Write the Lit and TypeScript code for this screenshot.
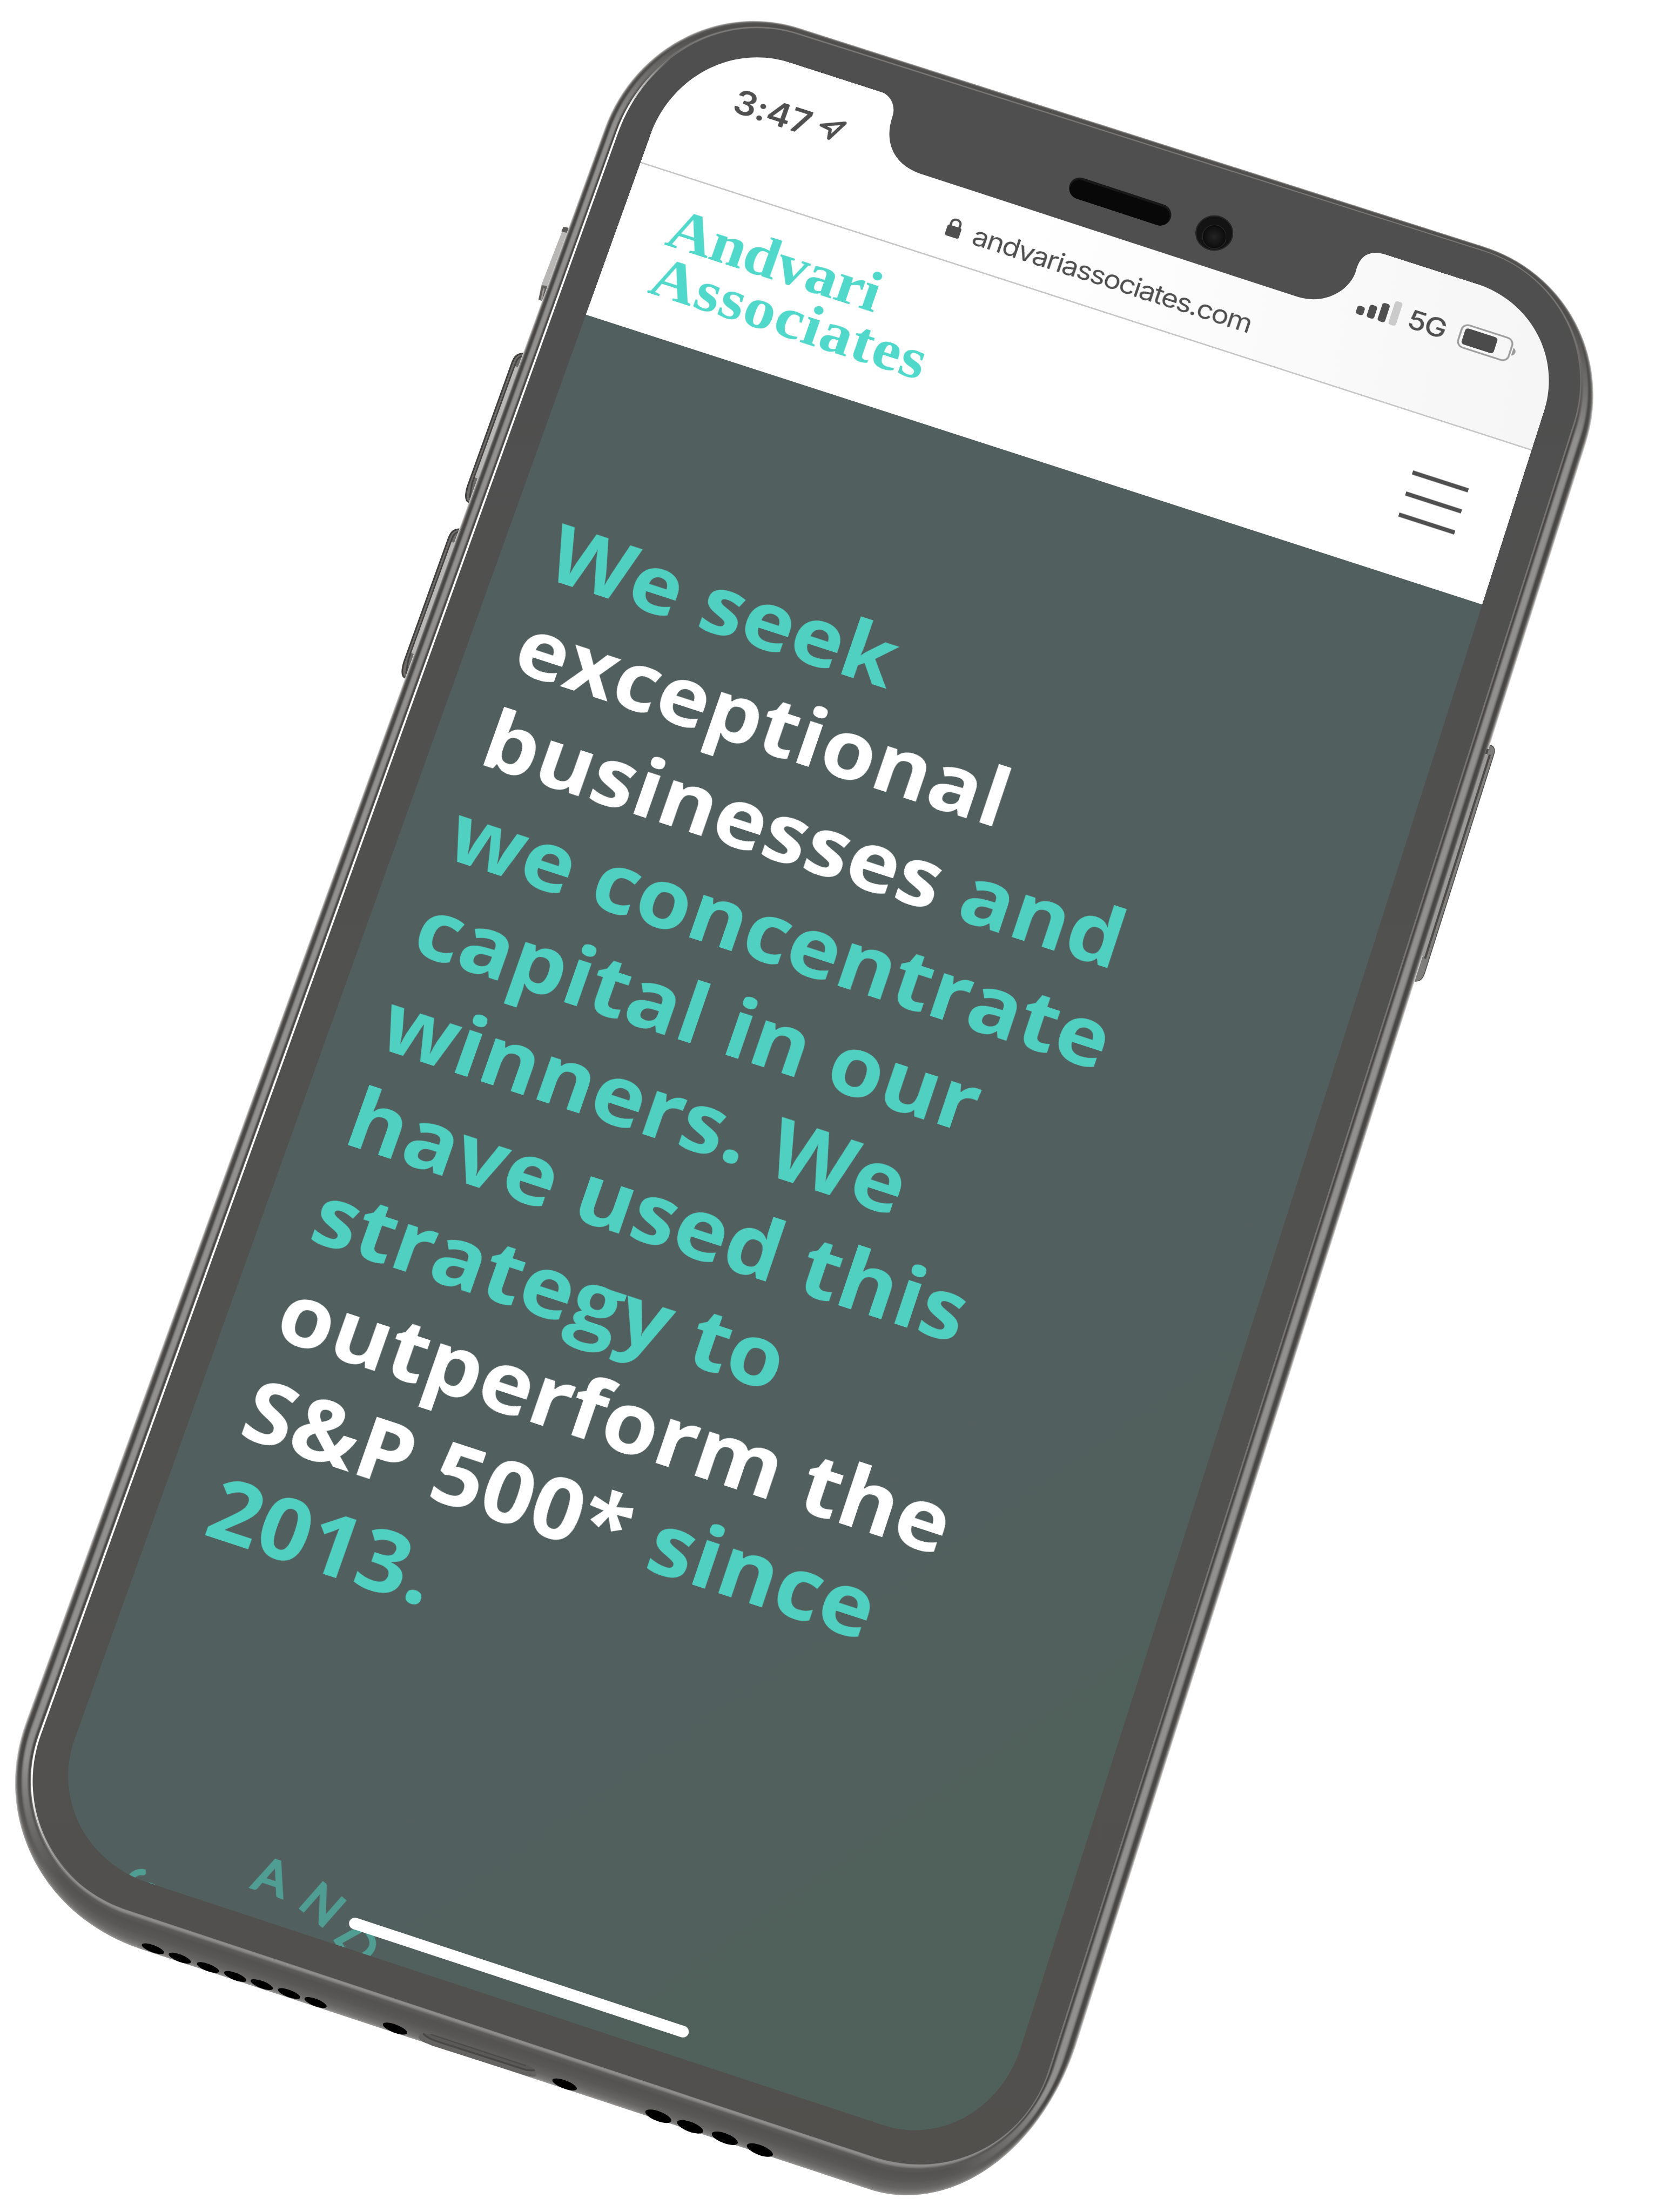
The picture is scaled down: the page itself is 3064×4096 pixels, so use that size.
import { LitElement, html, svg, css, unsafeCSS } from "lit";
import { customElement } from "lit/decorators.js";

type Pt = [number, number];
interface Shape {
  corners: Pt[];
  lens: [number, number][];
}

const ART_W = 4060;
const ART_H = 5428;
const PAGE_W = 3064;
const PAGE_H = 4096;
const SCALE = PAGE_W / ART_W;
const SCREEN_W = 1800;
const SCREEN_H = 3895;

/* Corners run top-left, top-right, bottom-right, bottom-left.
   Each length pair is the rounding [before, after] the corner, clockwise. */
const BODY: Shape = {
  corners: [[1613, -42], [4007, 722], [2490, 5490], [-87, 4640]],
  lens: [[381, 365], [385, 385], [502, 377], [456, 439]],
};
const GLASS: Shape = {
  corners: [[1637, -16], [3962, 719], [2470, 5401], [-18, 4578]],
  lens: [[362, 335], [340, 335], [335, 345], [349, 343]],
};
const SCREEN: Shape = {
  corners: [[1688, 73], [3863, 774], [2417, 5297], [89, 4529]],
  lens: [[275, 262], [253, 247], [287, 265], [290, 280]],
};

const lerp = (a: number, b: number, t: number) => a + (b - a) * t;

function mix(a: Shape, b: Shape, t: number): Shape {
  return {
    corners: a.corners.map((p, i) => [lerp(p[0], b.corners[i][0], t), lerp(p[1], b.corners[i][1], t)] as Pt),
    lens: a.lens.map((p, i) => [lerp(p[0], b.lens[i][0], t), lerp(p[1], b.lens[i][1], t)] as [number, number]),
  };
}

function toward(from: Pt, to: Pt, d: number): Pt {
  const dx = to[0] - from[0];
  const dy = to[1] - from[1];
  const l = Math.hypot(dx, dy);
  return [from[0] + (dx / l) * d, from[1] + (dy / l) * d];
}

/* Start point and curve command of one rounded corner. */
function corner(shape: Shape, i: number, s = 1, k = 0.56): [string, string] {
  const f = (p: Pt) => `${(p[0] * s).toFixed(2)} ${(p[1] * s).toFixed(2)}`;
  const n = shape.corners.length;
  const c = shape.corners[i];
  const prev = shape.corners[(i + n - 1) % n];
  const next = shape.corners[(i + 1) % n];
  const [la, lb] = shape.lens[i];
  return [
    f(toward(c, prev, la)),
    `C${f(toward(c, prev, la * (1 - k)))} ${f(toward(c, next, lb * (1 - k)))} ${f(toward(c, next, lb))}`,
  ];
}

function outline(shape: Shape, s = 1): string {
  return shape.corners.map((_, i) => {
    const [start, curve] = corner(shape, i, s);
    return `${i === 0 ? "M" : "L"}${start}${curve}`;
  }).join("") + "Z";
}

function leftSide(shape: Shape): string {
  const [s3, c3] = corner(shape, 3);
  const [s0, c0] = corner(shape, 0);
  return `M${s3}${c3}L${s0}${c0}`;
}

/* Projects the flat screen rectangle on to the tilted quad. */
function projection(q: Pt[], w: number, h: number, s: number): string {
  const [p0, p1, p2, p3] = q;
  const sx = p0[0] - p1[0] + p2[0] - p3[0];
  const sy = p0[1] - p1[1] + p2[1] - p3[1];
  const ax = p1[0] - p2[0], ay = p1[1] - p2[1];
  const bx = p3[0] - p2[0], by = p3[1] - p2[1];
  const det = ax * by - bx * ay;
  const g = (sx * by - bx * sy) / det;
  const k = (ax * sy - sx * ay) / det;
  const a = p1[0] - p0[0] + g * p1[0];
  const b = p3[0] - p0[0] + k * p3[0];
  const d = p1[1] - p0[1] + g * p1[1];
  const e = p3[1] - p0[1] + k * p3[1];
  const m = [
    (a * s) / w, (d * s) / w, 0, g / w,
    (b * s) / h, (e * s) / h, 0, k / h,
    0, 0, 1, 0,
    p0[0] * s, p0[1] * s, 0, 1,
  ];
  return `matrix3d(${m.map((v) => v.toFixed(12)).join(",")})`;
}

type Stop = [number, number];
/* Grey level across the metal rim, 0 at the silhouette and 1 at the glass. */
const TOP_RIM: Stop[] = [[0, 200], [0.1, 130], [0.25, 84], [0.6, 78], [0.72, 84], [0.82, 124], [0.92, 120], [1, 80]];
const SIDE_RIM: Stop[] = [[0, 215], [0.05, 160], [0.13, 95], [0.2, 72], [0.32, 72], [0.42, 128], [0.5, 146], [0.7, 144], [0.78, 100], [0.83, 70], [0.88, 72], [0.92, 118], [0.98, 118], [1, 80]];
const BOTTOM_RIM: Stop[] = [[0, 150], [0.06, 122], [0.2, 102], [0.45, 88], [0.7, 84], [0.84, 92], [0.9, 130], [0.95, 148], [1, 120]];

function level(stops: Stop[], t: number): string {
  let v = stops[stops.length - 1][1];
  for (let i = 1; i < stops.length; i++) {
    if (t <= stops[i][0]) {
      const [t0, v0] = stops[i - 1];
      const [t1, v1] = stops[i];
      v = lerp(v0, v1, (t - t0) / (t1 - t0));
      break;
    }
  }
  const c = Math.round(v);
  return `rgb(${c},${c - 1},${c - 2})`;
}

const RINGS = Array.from({ length: 44 }, (_, i) => i / 44);
const GRILLE_LEFT: Pt[] = [[375, 4782], [441, 4805], [510, 4828], [577, 4850], [642, 4870], [709, 4892], [774, 4914]];
const GRILLE_RIGHT: Pt[] = [[1615, 5193], [1693, 5219], [1778, 5247], [1864, 5276]];
const SCREWS: Pt[] = [[969, 4978], [1385, 5115]];

const HEADLINE: { text: string; strong?: boolean }[][] = [
  [{ text: "We seek" }],
  [{ text: "exceptional", strong: true }],
  [{ text: "businesses", strong: true }, { text: " and" }],
  [{ text: "we concentrate" }],
  [{ text: "capital in our" }],
  [{ text: "winners. We" }],
  [{ text: "have used this" }],
  [{ text: "strategy to" }],
  [{ text: "outperform the", strong: true }],
  [{ text: "S&P 500*", strong: true }, { text: " since" }],
  [{ text: "2013." }],
];

const SEAL: [string, number][] = [["S", -48.3], ["A", 0.3], ["N", 21.5], ["D", 41]];

@customElement("phone-body")
export class PhoneBody extends LitElement {
  static styles = css`
    :host { display: block; }
    svg { display: block; width: 100%; height: 100%; }
  `;

  private hole([x, y]: Pt, rx: number, ry: number) {
    return svg`<ellipse cx=${x} cy=${y} rx=${rx} ry=${ry} fill="#000" transform=${`rotate(21 ${x} ${y})`}></ellipse>`;
  }

  private volumeKey(shift: string) {
    return svg`<g transform=${shift}>
      <path d="M1292 869C1270 864 1261 873 1255 890L1147 1190C1139 1212 1140 1229 1149 1234L1165 1232L1292 900Z" fill="#6c6b69"></path>
      <path d="M1288 868C1270 866 1262 874 1256 891L1148 1191C1141 1212 1141 1228 1149 1232" fill="none" stroke="#424140" stroke-width="4"></path>
      <path d="M1286 874C1272 874 1268 882 1263 896L1158 1186L1152 1222" fill="none" stroke="#444342" stroke-width="4"></path>
    </g>`;
  }

  private volumeGlint(shift: string) {
    return svg`<g transform=${shift}>
      <path d="M1268 900L1169 1173" stroke="#b9b7b5" stroke-width="9" fill="none"></path>
    </g>`;
  }

  render() {
    return html`<svg viewBox="0 0 ${ART_W} ${ART_H}" aria-hidden="true">
      <defs>
        ${RINGS.map((t, i) => svg`<linearGradient id=${`r${i}`} gradientUnits="userSpaceOnUse" x1="157" y1="-475" x2="-1377" y2="4180">
          <stop offset="0.01" stop-color=${level(TOP_RIM, t)}></stop>
          <stop offset="0.065" stop-color=${level(SIDE_RIM, t)}></stop>
          <stop offset="0.935" stop-color=${level(SIDE_RIM, t)}></stop>
          <stop offset="0.985" stop-color=${level(BOTTOM_RIM, t)}></stop>
        </linearGradient>`)}
        <linearGradient id="bezel" x1="0" y1="0" x2="0" y2="1">
          <stop offset="0" stop-color="#4f4f4f"></stop>
          <stop offset="0.6" stop-color="#515150"></stop>
          <stop offset="1" stop-color="#51504d"></stop>
        </linearGradient>
        <linearGradient id="glint" gradientUnits="userSpaceOnUse" x1="157" y1="-475" x2="-1377" y2="4180">
          <stop offset="0.025" stop-color="#fff" stop-opacity="0"></stop>
          <stop offset="0.055" stop-color="#fff"></stop>
          <stop offset="0.95" stop-color="#fff"></stop>
          <stop offset="0.985" stop-color="#fff" stop-opacity="0"></stop>
        </linearGradient>
      </defs>

      <path d="M1400 560L1382 557L1377 572L1327 702L1321 735L1336 741Z" fill="#b8b7b5"></path>
      <path d="M1400 560L1382 557L1377 568L1398 573Z" fill="#5a5958"></path>
      <path d="M1329 700L1321 735L1336 741L1350 702Z" fill="#5e5d5c"></path>
      <path d="M1334 708L1328 738" stroke="#9a9997" stroke-width="4"></path>
      ${this.volumeKey("")}
      ${this.volumeKey("translate(-156 431)")}
      <path d="M3640 1850C3642 1832 3650 1827 3657 1829C3668 1832 3668 1843 3664 1854L3495 2388C3490 2402 3484 2408 3472 2408L3455 2400Z" fill="#7f7d7b" stroke="#50504f" stroke-width="2"></path>

      ${RINGS.map((t, i) => svg`<path d=${outline(mix(BODY, GLASS, t))} fill=${`url(#r${i})`}></path>`)}
      <path d=${outline(GLASS)} fill="url(#bezel)"></path>
      <path d=${leftSide(GLASS)} fill="none" stroke="url(#glint)" stroke-width="4.5"></path>

      ${this.volumeGlint("")}
      ${this.volumeGlint("translate(-156 431)")}
      <path d="M3648 1852L3491 2346" stroke="#9c9a98" stroke-width="7"></path>
      <path d="M3650 1838L3646 1850M3655 1852L3496 2352" stroke="#4b4a49" stroke-width="5"></path>

      ${GRILLE_LEFT.map((p) => this.hole(p, 29, 9))}
      ${GRILLE_RIGHT.map((p) => this.hole(p, 34, 12))}
      ${SCREWS.map((p) => this.hole(p, 32, 10))}
      <path d="M1027 4998C1030 4987 1048 4985 1062 4991L1296 5068C1310 5074 1318 5086 1315 5094C1312 5097 1300 5096 1290 5093L1060 5020C1040 5012 1026 5006 1027 4998Z" fill="#646362"></path>
      <path d="M1062 4991L1296 5068C1306 5073 1312 5078 1313 5083L1294 5081L1076 5010C1056 5003 1048 4998 1042 4990Z" fill="#5a5958"></path>
      <path d="M1038 4990C1050 5003 1066 5007 1084 5013L1286 5078C1296 5081 1304 5081 1312 5080" fill="none" stroke="#484746" stroke-width="4.5"></path>
      <path d="M1056 4992L1290 5069" stroke="#4c4b4a" stroke-width="3"></path>
    </svg>`;
  }
}

@customElement("phone-notch")
export class PhoneNotch extends LitElement {
  static styles = css`
    :host { display: block; }
    svg { display: block; width: 100%; height: 100%; }
  `;

  render() {
    return html`<svg viewBox="0 0 ${ART_W} ${ART_H}" aria-hidden="true">
      <defs>
        <radialGradient id="lens">
          <stop offset="0" stop-color="#242424"></stop>
          <stop offset="1" stop-color="#0b0b0b"></stop>
        </radialGradient>
      </defs>
      <path d="M2140 217L2157 223C2184 232 2199 258 2189 287C2168 350 2193 405 2260 427L3185 729C3242 746 3303 722 3325 670C3333 638 3348 610 3400 624.5L3400 570L2160 180Z" fill="#4f4f4f"></path>
      <path d="M2649 462L2847 527" stroke="#181818" stroke-width="53" stroke-linecap="round"></path>
      <path d="M2648 465L2846 530" stroke="#080808" stroke-width="47" stroke-linecap="round"></path>
      <ellipse cx="2979" cy="572" rx="46" ry="43" fill="#131313"></ellipse>
      <ellipse cx="2979" cy="572" rx="45" ry="42" fill="none" stroke="#262626" stroke-width="3"></ellipse>
      <circle cx="2979" cy="581" r="29" fill="url(#lens)" stroke="#2b2b2b" stroke-width="1.5"></circle>
    </svg>`;
  }
}

@customElement("phone-screen")
export class PhoneScreen extends LitElement {
  static styles = css`
    :host {
      display: flex;
      flex-direction: column;
      width: ${SCREEN_W}px;
      height: ${SCREEN_H}px;
      overflow: hidden;
      background: #fff;
      color: #4f4f4f;
      font-family: Inter, "Liberation Sans", sans-serif;
    }
    svg { display: block; flex: none; }
    .chrome {
      box-sizing: border-box;
      height: 305px;
      padding-top: 78px;
      border-bottom: 3px solid #c6c6c6;
      background: linear-gradient(82deg, #fff 40%, #f6f6f6 95%);
    }
    .status {
      display: flex;
      justify-content: space-between;
      height: 70px;
      padding: 0 84px 0 131px;
    }
    .group { display: flex; }
    .time {
      width: 167px;
      font-size: 71px;
      line-height: 71px;
      font-weight: 600;
      letter-spacing: -0.5px;
      white-space: nowrap;
    }
    .net {
      width: 98px;
      padding-left: 17px;
      box-sizing: border-box;
      font-size: 58px;
      line-height: 74px;
      font-weight: 500;
      letter-spacing: -2px;
    }
    .address {
      display: flex;
      justify-content: center;
      gap: 24px;
      margin-top: 54px;
      padding-left: 11px;
      font-size: 56px;
      line-height: 60px;
      letter-spacing: -2.3px;
    }
    .header {
      box-sizing: border-box;
      display: flex;
      justify-content: space-between;
      height: 343px;
      padding: 55px 92px 0 95px;
    }
    .logo {
      font-family: "Liberation Serif", serif;
      font-weight: 700;
      font-size: 122px;
      line-height: 108px;
      color: #50d8ca;
    }
    .logo .first { letter-spacing: -1.5px; }
    .logo .second { letter-spacing: 1.6px; }
    .menu { margin-top: 62px; }
    .hero {
      position: relative;
      flex: 1;
      padding: 386px 0 0 92px;
      background: linear-gradient(125deg, #525f5f 62%, #50605b 84%);
    }
    h1 {
      margin: 0;
      font-family: "Open Sans", "Noto Sans", sans-serif;
      font-weight: 700;
      font-size: 166.2px;
      line-height: 203.2px;
      color: #50d0c1;
      white-space: pre;
    }
    .strong { color: #fff; }
    .line { display: block; }
    .seal {
      position: absolute;
      left: 0;
      bottom: 0;
    }
    .seal text {
      font-family: Lato, sans-serif;
      font-size: 89px;
      fill: #509e93;
      stroke: #509e93;
      stroke-width: 4.5px;
    }
    .home {
      position: absolute;
      left: 579px;
      bottom: 38px;
      width: 644px;
      height: 22px;
      border-radius: 11px;
      background: #fff;
    }
  `;

  render() {
    return html`
      <div class="chrome">
        <div class="status">
          <div class="group">
            <span class="time">3:47</span>
            <svg width="58" height="70" viewBox="298 78 58 70">
              <path d="M305 108L347 88L327 130L324 111Z" fill="none" stroke="#4f4f4f" stroke-width="6.5" stroke-linejoin="round"></path>
            </svg>
          </div>
          <div class="group">
            <svg width="84" height="70" viewBox="1396 78 84 70">
              <rect x="1397" y="122" width="15" height="19" rx="5" fill="#4f4f4f"></rect>
              <rect x="1419" y="112" width="15" height="29" rx="5" fill="#4f4f4f"></rect>
              <rect x="1441" y="100" width="15" height="41" rx="5" fill="#4f4f4f"></rect>
              <rect x="1463" y="88" width="15" height="53" rx="5" fill="#cbcbcb"></rect>
            </svg>
            <span class="net">5G</span>
            <svg width="138" height="70" viewBox="1578 78 138 70">
              <rect x="1601" y="90" width="102" height="50" rx="13" fill="none" stroke="#9b9b9b" stroke-width="3.5"></rect>
              <rect x="1608" y="97" width="65" height="36" rx="6" fill="#4b4b4b"></rect>
              <path d="M1707 107C1715 109 1715 122 1707 124Z" fill="#9b9b9b"></path>
            </svg>
          </div>
        </div>
        <div class="address">
          <svg width="30" height="60" viewBox="600 202 30 60">
            <path d="M606 230V222C606 209 624 209 624 222V230" fill="none" stroke="#4f4f4f" stroke-width="4.5"></path>
            <rect x="601" y="227" width="28" height="24" rx="4" fill="#4f4f4f"></rect>
          </svg>
          <span>andvariassociates.com</span>
        </div>
      </div>
      <div class="header">
        <div class="logo">
          <div class="first">Andvari</div>
          <div class="second">Associates</div>
        </div>
        <svg class="menu" width="112" height="104" viewBox="0 0 112 104">
          <path d="M0 5H112M0 52H112M0 99H112" stroke="#4f4f4f" stroke-width="9"></path>
        </svg>
      </div>
      <div class="hero">
        <h1>${HEADLINE.map((line) => html`<span class="line">${line.map((run) => html`<span class=${run.strong ? "strong" : ""}>${run.text}</span>`)}</span>`)}</h1>
        <svg class="seal" width="900" height="295" viewBox="0 3600 900 295">
          ${SEAL.map(([letter, angle]) => svg`<text x="419" y="3843" text-anchor="middle" transform=${`rotate(${angle} 419 4096)`}>${letter}</text>`)}
        </svg>
        <div class="home"></div>
      </div>
    `;
  }
}

@customElement("app-root")
export class AppRoot extends LitElement {
  static styles = css`
    :host {
      display: block;
      background: #fff;
    }
    .stage {
      display: grid;
      width: ${PAGE_W}px;
      height: ${PAGE_H}px;
      overflow: hidden;
    }
    .layer {
      grid-area: 1 / 1;
      width: ${PAGE_W}px;
      height: ${PAGE_H}px;
      overflow: hidden;
    }
    .window {
      z-index: 1;
      clip-path: path("${unsafeCSS(outline(SCREEN, SCALE))}");
    }
    .front { z-index: 2; }
    phone-screen {
      transform-origin: 0 0;
      transform: ${unsafeCSS(projection(SCREEN.corners, SCREEN_W, SCREEN_H, SCALE))};
    }
  `;

  render() {
    return html`<div class="stage">
      <phone-body class="layer"></phone-body>
      <div class="layer window"><phone-screen></phone-screen></div>
      <phone-notch class="layer front"></phone-notch>
    </div>`;
  }
}
